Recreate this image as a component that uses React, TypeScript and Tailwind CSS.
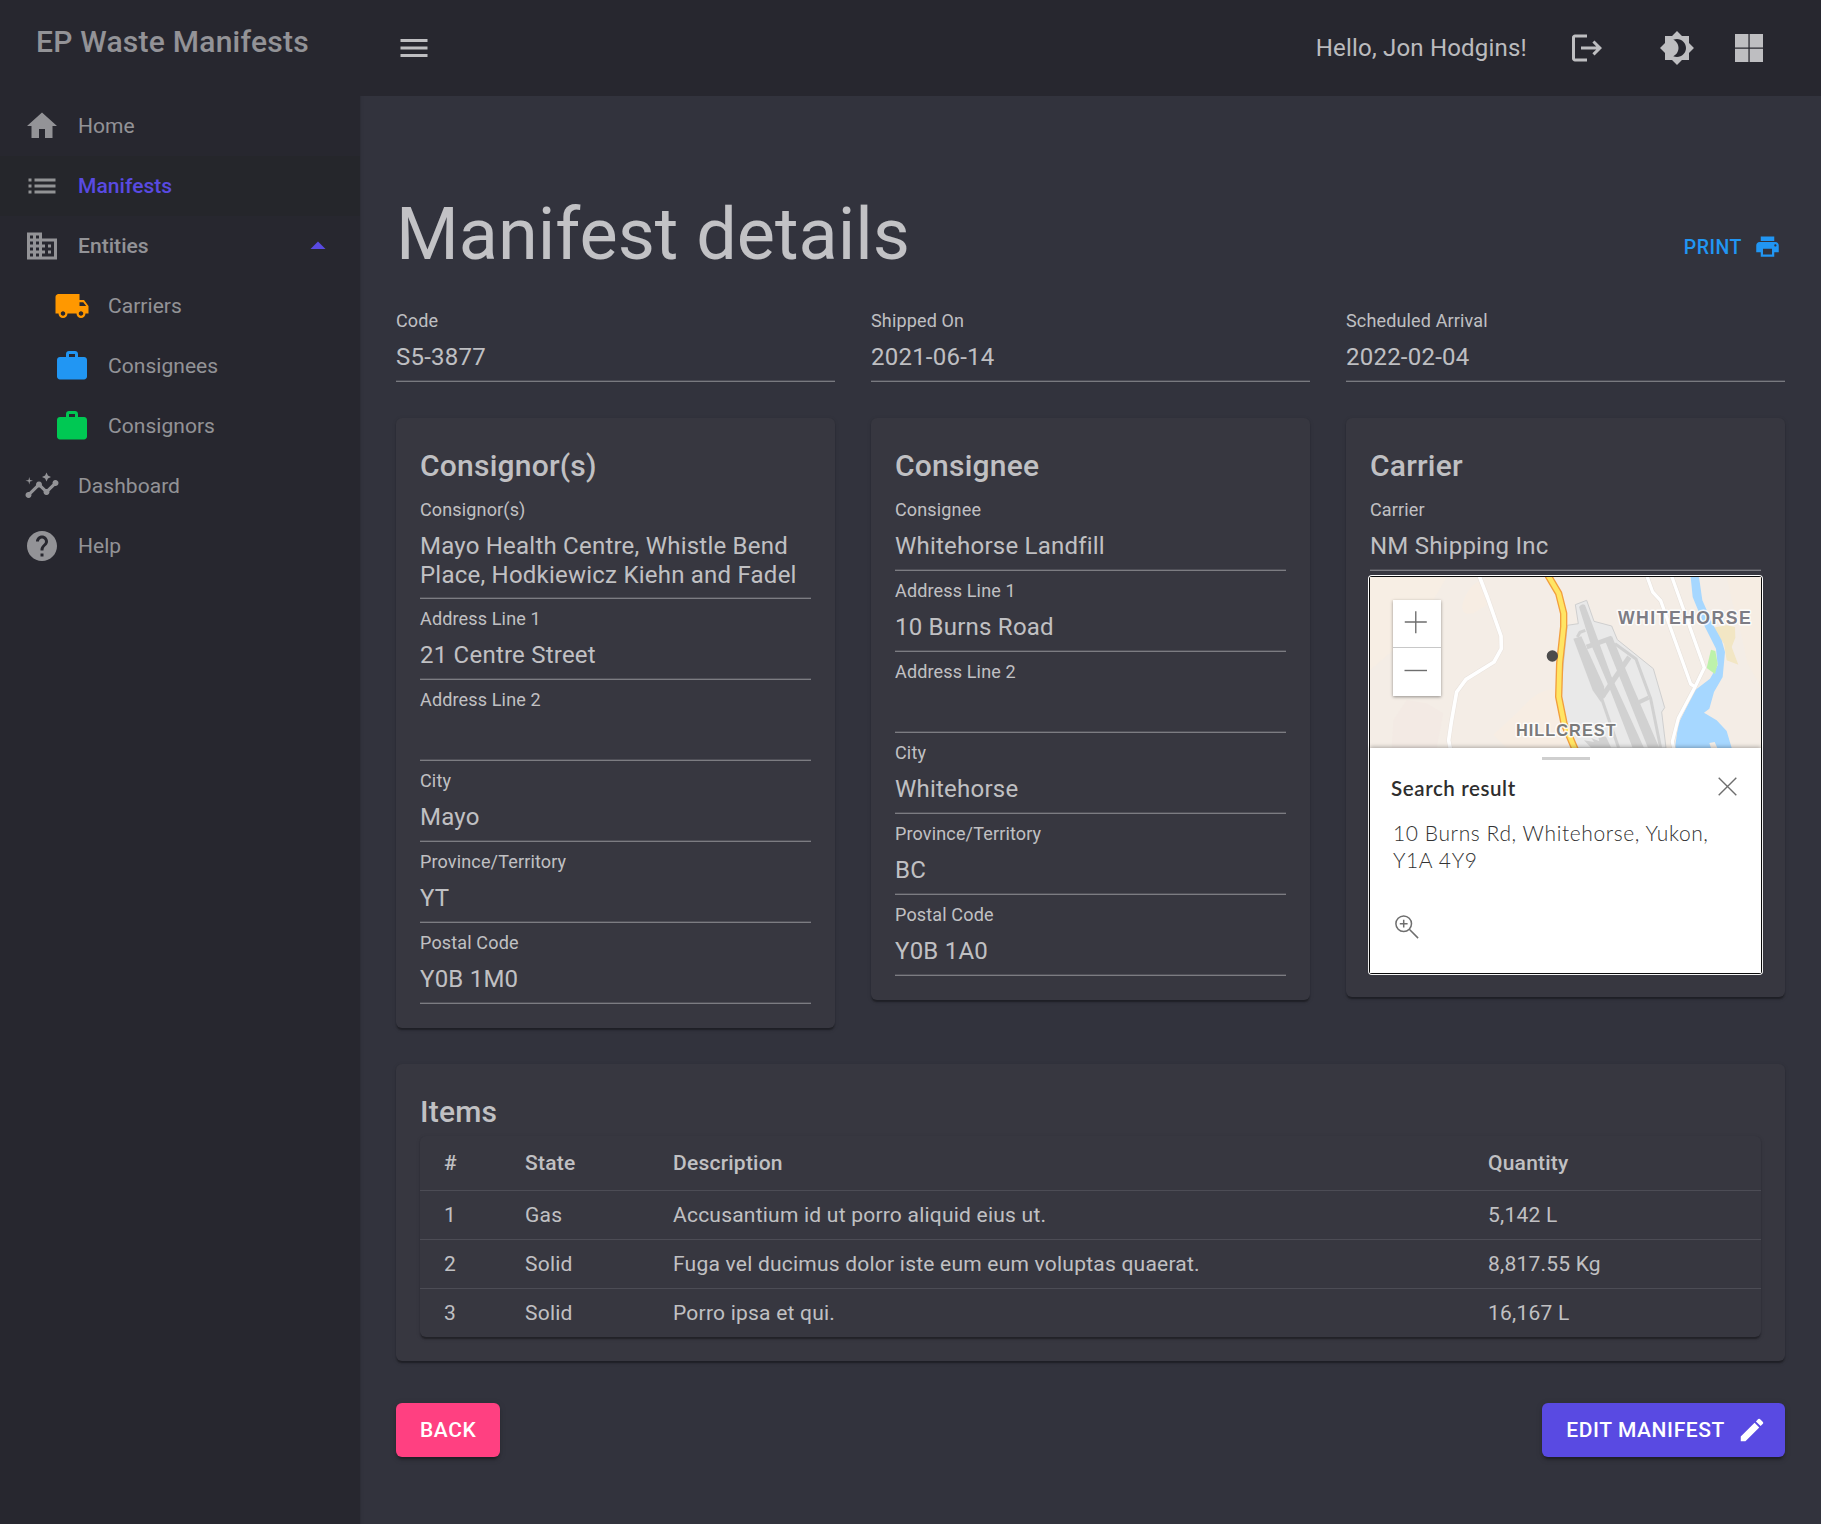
import type { ReactNode } from "react";
import {
  MdArrowDropUp,
  MdBrightness4,
  MdBusiness,
  MdEdit,
  MdHelp,
  MdHome,
  MdInsights,
  MdList,
  MdLocalShipping,
  MdLogout,
  MdMenu,
  MdPrint,
  MdWork,
} from "react-icons/md";

const cardShadow =
  "shadow-[0_3px_1.5px_-1.5px_rgba(0,0,0,0.2),0_1.5px_1.5px_0_rgba(0,0,0,0.14),0_1.5px_4.5px_0_rgba(0,0,0,0.12)]";
const buttonShadow =
  "shadow-[0_4.5px_1.5px_-3px_rgba(0,0,0,0.2),0_3px_3px_0_rgba(0,0,0,0.14),0_1.5px_7.5px_0_rgba(0,0,0,0.12)]";

function NavItem({
  icon,
  label,
  nested,
  active,
  medium,
  children,
}: {
  icon: ReactNode;
  label: string;
  nested?: boolean;
  active?: boolean;
  medium?: boolean;
  children?: ReactNode;
}) {
  return (
    <li
      className={`flex h-[60px] items-center pr-6 text-[21px] ${nested ? "pl-[54px]" : "pl-6"} ${
        active ? "bg-[#25262b]" : ""
      } ${active || medium ? "font-medium" : ""}`}
    >
      <span className="mr-[18px] text-[36px] text-white/50">{icon}</span>
      <span className={`pt-0.5 tracking-[0.05px] ${active ? "text-[#594ae2]" : "text-white/50"}`}>{label}</span>
      {children}
    </li>
  );
}

function Field({ label, value }: { label: string; value: string }) {
  return (
    <div className="pt-2">
      <div className="text-[18px] leading-6 tracking-[0.15px]">{label}</div>
      <div className="mt-[10px] min-h-[29px] text-[24px] leading-[28.5px] tracking-[0.225px]">{value}</div>
      <div className="mt-2 h-px bg-white/12" />
      <div className="h-px bg-white/35" />
    </div>
  );
}

function Card({ title, children }: { title: string; children: ReactNode }) {
  return (
    <section className={`rounded-md bg-[#373740] p-6 ${cardShadow}`}>
      <h6 className="text-[30px] leading-[48px] font-medium tracking-[0.225px]">{title}</h6>
      {children}
    </section>
  );
}

function MapArt() {
  return (
    <svg className="block h-[171px] w-full" viewBox="90 531 1173 513" preserveAspectRatio="none">
      <rect x="90" y="531" width="1173" height="513" fill="#f4ede6" />
      <path d="M90 531h230l-40 70-60 60-60 90-70 60z" fill="#f7eee4" />
      <path d="M375 590q20-40 50-50l25 70-50 30q-50 10-25-50zM540 930q60-70 110-60l30 174H500l-40-40z" fill="#f7ede3" />
      <path d="M160 960l40-60 60 10 50 30-20 104H155z" fill="#f3eae4" />
      <path d="M1160 531h103v330l-40-70-20-90-20-70z" fill="#f6ede3" />
      <g transform="translate(600 531)">
        {/* Airport grounds */}
        <path
          d="M82 145L115 140 106 83 140 70 162 133 215 147 232 188 340 275 374 392 365 405 378 513H100L60 360z"
          fill="#e9e9e9"
          stroke="#cfcfcf"
          strokeWidth="3"
        />
        {/* Runways and aprons */}
        <g fill="#d1d1d1">
          <path d="M117 90q8-12 18-6L158 145 215 300 312 513H278L205 325 150 195z" />
          <path d="M194 188l22-10 60 145 82 190h-34z" />
          <path d="M100 185l24-7 68 150 4 30-14 16-24-34z" />
          <path d="M132 490l30 5-8-12 24 10-4-16 24 2 16 34h-60z" />
        </g>
        <g fill="none" stroke="#d1d1d1">
          <path d="M186 360L268 240" strokeWidth="15" />
          <path d="M180 350L236 513" strokeWidth="9" />
          <path d="M225 200L288 246 332 365 362 513" strokeWidth="9" />
          <path d="M288 380L326 362" strokeWidth="12" />
          <path d="M140 210L215 183" strokeWidth="14" />
          <path d="M112 180L120 166 136 160" strokeWidth="9" />
        </g>
        {/* Parkland and river */}
        <path d="M518 152L560 145 585 150 586 182 575 210 595 263 560 250 552 200z" fill="#f2e6c4" />
        <path
          d="M452 0H477L487 70 520 145 545 190 555 225 548 300 522 345 508 395 492 407 530 430 560 462 575 513H405L415 440 465 340 510 305 533 265 528 215 495 150 458 60z"
          fill="#a6d7ff"
        />
        <path d="M513 513L508 498 524 495 532 513z" fill="#f4ede6" />
        <path d="M513 218L526 222 533 260 525 291 500 273z" fill="#bdf2ab" />
      </g>
      <g fill="none" strokeLinejoin="round">
        <path d="M417 526l26 68 40 114 1 38-22 40-84 52-28 38-16 90-8 55 8 40" stroke="#e9e2dc" strokeWidth="14" />
        <path d="M417 526l26 68 40 114 1 38-22 40-84 52-28 38-16 90-8 55 8 40" stroke="#fff" strokeWidth="11" />
        <path d="M920 526l18 50 24 26 90 250 15 10M994 526l99 277-28 58-50 94-18 70 6 30" stroke="#e6e0da" strokeWidth="13" />
        <path d="M920 526l18 50 24 26 90 250 15 10M994 526l99 277-28 58-50 94-18 70 6 30" stroke="#fff" strokeWidth="10" />
        <path d="M624 526l32 54 15 60 0 40-12 110-3 100 16 80 34 80" stroke="#f29f3d" strokeWidth="22" />
        <path d="M624 526l32 54 15 60 0 40-12 110-3 100 16 80 34 80" stroke="#ffe564" strokeWidth="14" />
      </g>
      <circle cx="637" cy="768" r="17" fill="#4c4c4c" />
      <g
        fontFamily="Liberation Sans, Arial, sans-serif"
        fontWeight="bold"
        fill="#7d7d85"
        stroke="#fff"
        strokeWidth="9"
        strokeOpacity="0.85"
        strokeLinejoin="round"
        paintOrder="stroke"
      >
        <text x="834" y="671" fontSize="53" textLength="398">WHITEHORSE</text>
        <text x="528" y="1007" fontSize="49" textLength="299" fill="#7a7a7a">HILLCREST</text>
      </g>
    </svg>
  );
}

function CarrierMap() {
  return (
    <div className="relative mt-1.5 h-[396px] rounded-[2px] bg-white font-['Lato','Open_Sans',sans-serif] shadow-[0_0_0_1px_#0c0c0c,0_0_0_2px_#fff]">
      <MapArt />
      <div className="absolute top-[23px] left-[23px] flex w-12 flex-col bg-white shadow-[0_1px_3px_rgba(0,0,0,0.4)]">
        <svg className="h-12 w-12 border-b border-[#c8c8c8]" viewBox="0 0 48 48" stroke="#6e6e6e" strokeWidth="1.4">
          <path d="M11.5 22.5h22.5M22.75 11.5v22.5" />
        </svg>
        <svg className="h-12 w-12" viewBox="0 0 48 48" stroke="#6e6e6e" strokeWidth="1.4">
          <path d="M11.5 22.5h22.5" />
        </svg>
      </div>
      <div className="relative flex h-[225px] flex-col bg-white shadow-[0_-1px_4px_rgba(0,0,0,0.3)]">
        <div className="mx-auto mt-[9px] h-[3px] w-12 bg-[#cfcfcf]" />
        <div className="mt-[10px] flex h-[36px] items-center justify-between pr-[24px] pl-[21px]">
          <span className="text-[20.5px] leading-9 font-semibold tracking-[0.6px] text-[#2e2e2e]">Search result</span>
          <svg className="-mt-1 h-[19px] w-[19px]" viewBox="0 0 19 19" stroke="#6e6e6e" strokeWidth="1.4">
            <path d="M.7.7l17.6 17.6M18.3.7L.7 18.3" />
          </svg>
        </div>
        <p className="mt-[13px] pl-[23px] text-[21px] leading-[27px] font-light tracking-[0.6px] text-[#323232]">
          10 Burns Rd, Whitehorse, Yukon,
          <br />
          Y1A 4Y9
        </p>
        <svg className="mt-[42px] ml-[25px] h-6 w-6" viewBox="0 0 24 24" fill="none" stroke="#6e6e6e" strokeWidth="1.5">
          <circle cx="8.7" cy="8.7" r="7.8" />
          <path d="M14.3 14.3l8.8 8.8M4.8 8.7h7.8M8.7 4.8v7.8" />
        </svg>
      </div>
    </div>
  );
}

const items = [
  ["1", "Gas", "Accusantium id ut porro aliquid eius ut.", "5,142 L"],
  ["2", "Solid", "Fuga vel ducimus dolor iste eum eum voluptas quaerat.", "8,817.55 Kg"],
  ["3", "Solid", "Porro ipsa et qui.", "16,167 L"],
];
const columns = "grid grid-cols-[81px_148px_815px_1fr] items-center pl-6 pt-0.5";

export default function App() {
  return (
    <div className="flex h-[1524px] w-[1821px] overflow-hidden bg-[#32333d] font-['Roboto',sans-serif] text-white/70">
      <aside className={`w-[360px] shrink-0 bg-[#27272f] ${cardShadow}`}>
        <div className="h-24 pt-[18px] pl-9 text-[30px] leading-[48px] font-medium tracking-[0.24px] text-white/50">
          EP Waste Manifests
        </div>
        <ul>
          <NavItem icon={<MdHome />} label="Home" />
          <NavItem icon={<MdList />} label="Manifests" active />
          <NavItem icon={<MdBusiness />} label="Entities" medium>
            <MdArrowDropUp className="ml-auto text-[36px] text-[#594ae2]" />
          </NavItem>
          <NavItem icon={<MdLocalShipping className="text-[#ff9800]" />} label="Carriers" nested />
          <NavItem icon={<MdWork className="text-[#2196f3]" />} label="Consignees" nested />
          <NavItem icon={<MdWork className="text-[#00c853]" />} label="Consignors" nested />
          <NavItem icon={<MdInsights />} label="Dashboard" />
          <NavItem icon={<MdHelp />} label="Help" />
        </ul>
      </aside>

      <div className="flex grow flex-col">
        <header className="flex h-24 items-center bg-[#27272f] pr-[54px] pl-9 text-[36px]">
          <MdMenu />
          <span className="ml-auto text-[24px] tracking-[0.2px]">Hello, Jon Hodgins!</span>
          <MdLogout className="ml-[42px]" />
          <MdBrightness4 className="ml-[54px]" />
          <svg className="ml-9 h-9 w-9" viewBox="0 0 36 36" fill="currentColor">
            <path d="M4 4h13.4v13.4H4zM18.7 4H32v13.4H18.7zM4 18.7h13.4V32H4zM18.7 18.7H32V32H18.7z" />
          </svg>
        </header>

        <main className="px-9 pt-24">
          <div className="flex h-[84px] items-center justify-between">
            <h3 className="pt-0.5 text-[72px] leading-[84px]">Manifest details</h3>
            <button className="mt-6 mr-1 flex items-center gap-3 text-[19.5px] font-medium tracking-[0.53px] text-[#2196f3]">
              <span className="pt-[3px]">PRINT</span>
              <MdPrint className="text-[27px]" />
            </button>
          </div>

          <div className="mt-[25px] grid grid-cols-3 gap-9">
            <Field label="Code" value="S5-3877" />
            <Field label="Shipped On" value="2021-06-14" />
            <Field label="Scheduled Arrival" value="2022-02-04" />
          </div>

          <div className="mt-9 grid grid-cols-3 items-start gap-9">
            <Card title="Consignor(s)">
              <Field label="Consignor(s)" value="Mayo Health Centre, Whistle Bend Place, Hodkiewicz Kiehn and Fadel" />
              <Field label="Address Line 1" value="21 Centre Street" />
              <Field label="Address Line 2" value="" />
              <Field label="City" value="Mayo" />
              <Field label="Province/Territory" value="YT" />
              <Field label="Postal Code" value="Y0B 1M0" />
            </Card>
            <Card title="Consignee">
              <Field label="Consignee" value="Whitehorse Landfill" />
              <Field label="Address Line 1" value="10 Burns Road" />
              <Field label="Address Line 2" value="" />
              <Field label="City" value="Whitehorse" />
              <Field label="Province/Territory" value="BC" />
              <Field label="Postal Code" value="Y0B 1A0" />
            </Card>
            <Card title="Carrier">
              <Field label="Carrier" value="NM Shipping Inc" />
              <CarrierMap />
            </Card>
          </div>

          <div className="mt-9">
            <Card title="Items">
              <div className={`rounded-md bg-[#373740] text-[21px] tracking-[0.225px] ${cardShadow}`}>
                <div className={`${columns} h-[55px] border-b border-[#4c4c55] font-medium`}>
                  <span>#</span>
                  <span>State</span>
                  <span>Description</span>
                  <span>Quantity</span>
                </div>
                {items.map((row) => (
                  <div key={row[0]} className={`${columns} h-[49px] border-b border-[#4c4c55] last:h-12 last:border-0`}>
                    {row.map((cell, i) => (
                      <span key={i}>{cell}</span>
                    ))}
                  </div>
                ))}
              </div>
            </Card>
          </div>

          <div className="mt-[42px] flex justify-between text-[21px] font-medium tracking-[0.6px] text-white">
            <button className={`h-[54px] rounded-md bg-[#ff4081] px-6 pt-0.5 ${buttonShadow}`}>BACK</button>
            <button className={`flex h-[54px] items-center rounded-md bg-[#594ae2] pr-[18px] pl-6 ${buttonShadow}`}>
              <span className="pt-0.5">EDIT MANIFEST</span>
              <MdEdit className="ml-3 text-[30px]" />
            </button>
          </div>
        </main>
      </div>
    </div>
  );
}
